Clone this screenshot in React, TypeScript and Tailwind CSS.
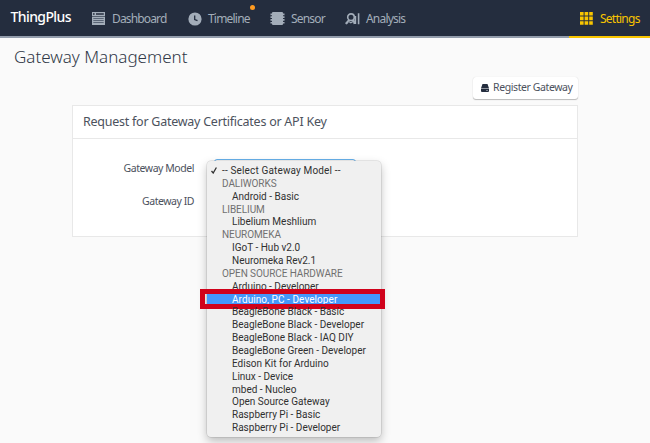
import React from "react";

type Row = { label: string; kind: "selected" | "group" | "item" | "active" };

const rows: Row[] = [
  { label: "-- Select Gateway Model --", kind: "selected" },
  { label: "DALIWORKS", kind: "group" },
  { label: "Android - Basic", kind: "item" },
  { label: "LIBELIUM", kind: "group" },
  { label: "Libelium Meshlium", kind: "item" },
  { label: "NEUROMEKA", kind: "group" },
  { label: "IGoT - Hub v2.0", kind: "item" },
  { label: "Neuromeka Rev2.1", kind: "item" },
  { label: "OPEN SOURCE HARDWARE", kind: "group" },
  { label: "Arduino - Developer", kind: "item" },
  { label: "Arduino, PC - Developer", kind: "active" },
  { label: "BeagleBone Black - Basic", kind: "item" },
  { label: "BeagleBone Black - Developer", kind: "item" },
  { label: "BeagleBone Black - IAQ DIY", kind: "item" },
  { label: "BeagleBone Green - Developer", kind: "item" },
  { label: "Edison Kit for Arduino", kind: "item" },
  { label: "Linux - Device", kind: "item" },
  { label: "mbed - Nucleo", kind: "item" },
  { label: "Open Source Gateway", kind: "item" },
  { label: "Raspberry Pi - Basic", kind: "item" },
  { label: "Raspberry Pi - Developer", kind: "item" },
];

const rowStyle = {
  selected: "pl-[15px] text-[#303030] tracking-[0.15px]",
  group: "pl-[15px] text-[#707070] tracking-[-0.08px]",
  item: "pl-[25px] text-[#303030]",
  active: "pl-[25px] bg-[#4497fb] text-white tracking-[0.06px]",
};

function DashboardIcon() {
  return (
    <svg width="13" height="13" viewBox="0 0 13 13" fill="#a3adb9">
      <path fillRule="evenodd" d="M0 0h13v4H0zM1 1.2v1.6h1.6V1.2zM4 1.2v1.6h7.8V1.2z" />
      <path d="M0 4.6h13V13H0z" />
      <path d="M1.3 6.5h10.4M1.3 8.5h10.4M1.3 10.5h10.4" stroke="#485364" strokeWidth=".8" />
    </svg>
  );
}

function ClockIcon() {
  return (
    <svg width="14" height="14" viewBox="0 0 14 14">
      <circle cx="7" cy="7" r="6.6" fill="#a3adb9" />
      <path d="M6.7 3.5v4l2.8 1.2" fill="none" stroke="#242d3e" strokeWidth="1.3" />
    </svg>
  );
}

function SensorIcon() {
  return (
    <svg width="15" height="13" viewBox="0 0 15 13" fill="#a3adb9">
      <rect x="2" y="0" width="11" height="13" rx="1" />
      <path d="M.5 1.5h14v1.7H.5zM.5 4.3h14V6H.5zM.5 7.1h14v1.7H.5zM.5 9.9h14v1.7H.5z" />
    </svg>
  );
}

function AnalysisIcon() {
  return (
    <svg width="15" height="12" viewBox="0 0 15 12" fill="none" stroke="#a3adb9" strokeWidth="1.6">
      <circle cx="6" cy="4.2" r="3.3" />
      <path d="M3.8 7 1.4 10M8.4 7l1 4M10.4 3V11M13.6.3V11.3" />
      <path d="M1.2 10.3 4 8.6l1.8 1.2L9 8" strokeWidth="1.2" />
      <circle cx="1.5" cy="10.2" r=".9" fill="#a3adb9" strokeWidth=".6" />
    </svg>
  );
}

function GridIcon() {
  return (
    <svg width="13" height="13" viewBox="0 0 13 13" fill="#f8c500">
      <path d="M0 0h3.6v3.6H0zM4.6 0h3.6v3.6H4.6zM9.2 0h3.6v3.6H9.2zM0 4.6h3.6v3.6H0zM4.6 4.6h3.6v3.6H4.6zM9.2 4.6h3.6v3.6H9.2zM0 9.2h3.6v3.6H0zM4.6 9.2h3.6v3.6H4.6zM9.2 9.2h3.6v3.6H9.2z" />
    </svg>
  );
}

function GatewayIcon() {
  return (
    <svg className="shrink-0" width="8" height="8" viewBox="0 0 8 8" fill="#242d3e">
      <path d="M1.5 0h5L8 4.2H0zM0 4.8h8V7a1 1 0 0 1-1 1H1a1 1 0 0 1-1-1z" />
      <path d="M5 6h2v.8H5z" fill="#9aa1ab" />
    </svg>
  );
}

function Header() {
  return (
    <header className="flex h-[38px] border-b-2 border-[#929cab] bg-[#242d3e] text-[12px] text-[#a3adb9]">
      <div className="w-[92px] pl-[10.5px] pt-[7px] text-[14px] font-medium leading-[20px] tracking-[-0.6px] text-white">ThingPlus</div>
      <nav className="flex flex-1 pt-[1px] leading-[36px]">
        <div className="flex w-[96px] items-center">
          <DashboardIcon />
          <span className="ml-[7px] whitespace-nowrap tracking-[-0.85px]">Dashboard</span>
        </div>
        <div className="relative flex w-[82px] items-center">
          <ClockIcon />
          <span className="ml-[6px] whitespace-nowrap tracking-[-0.8px]">Timeline</span>
          <span className="absolute left-[62px] top-[4px] size-[5px] rounded-full bg-[#ff9b20]" />
        </div>
        <div className="flex w-[75px] items-center">
          <SensorIcon />
          <span className="ml-[6px] whitespace-nowrap tracking-[-0.8px]">Sensor</span>
        </div>
        <div className="flex items-center">
          <AnalysisIcon />
          <span className="ml-[6px] whitespace-nowrap tracking-[-0.8px]">Analysis</span>
        </div>
      </nav>
      <div className="-mb-[2px] flex w-[81px] items-center border-b-2 border-[#f8c500] pl-[11px] pt-[1px] text-[#f8c500]">
        <GridIcon />
        <span className="ml-[7px] whitespace-nowrap tracking-[-0.75px]">Settings</span>
      </div>
    </header>
  );
}

function ModelMenu() {
  return (
    <div className="absolute -left-[8px] top-[1px] h-[276px] w-[174px] rounded-[4px] bg-[#f0f0f0] pt-[3px] font-['Roboto','Liberation_Sans',sans-serif] text-[10px] shadow-[0_0_0_0.5px_rgba(0,0,0,0.15),0_4px_10px_rgba(0,0,0,0.25)]">
      {rows.map((row) => (
        <div key={row.label} className={`relative h-[12.86px] whitespace-nowrap leading-[13px] ${rowStyle[row.kind]}`}>
          {row.kind === "selected" && (
            <svg className="absolute left-[4px] top-[3px]" width="6" height="7" viewBox="0 0 6 7" fill="none" stroke="#303030" strokeWidth="1.3">
              <path d="m.5 4 1.7 2L5.4.5" />
            </svg>
          )}
          {row.label}
          {row.kind === "active" && (
            <span className="absolute -left-[7px] -top-[3.6px] h-[20px] w-[185px] border-[5px] border-[#d0021b]" />
          )}
        </div>
      ))}
    </div>
  );
}

export default function App() {
  return (
    <div className="h-[443px] w-[650px] overflow-hidden bg-[#fafafa] font-['Noto_Sans','Open_Sans',sans-serif] text-[#4c525d]">
      <Header />
      <main>
        <h1 className="h-[38px] pl-[14px] pt-[7px] text-[17px] font-light leading-[24px] text-[#303847]">Gateway Management</h1>
        <div className="flex h-[29px] justify-end pr-[72px]">
          <button className="mt-[1px] flex h-[22px] w-[105px] items-center whitespace-nowrap rounded-[3px] bg-white pl-[8px] text-[10.5px] tracking-[-0.4px] shadow-[0_1px_1px_0_rgba(0,0,0,0.25),0_0_1px_0_rgba(0,0,0,0.15)]">
            <GatewayIcon />
            <span className="ml-[4px]">Register Gateway</span>
          </button>
        </div>
        <section className="ml-[72px] h-[132px] w-[506px] border border-[#e8e8e8] bg-white">
          <h2 className="h-[33px] border-b border-[#e8e8e8] pl-[10px] text-[12.5px] leading-[32px] tracking-[-0.25px]">Request for Gateway Certificates or API Key</h2>
          <div className="flex pt-[20px]">
            <div className="w-[121px] text-right text-[10.5px] leading-[18px] tracking-[-0.45px]">
              <div className="h-[33px]">Gateway Model</div>
              <div>Gateway ID</div>
            </div>
            <div className="relative ml-[20px] h-[22px] w-[142px] rounded-[3px] border border-[#66afe9] bg-white">
              <ModelMenu />
            </div>
          </div>
        </section>
      </main>
    </div>
  );
}
